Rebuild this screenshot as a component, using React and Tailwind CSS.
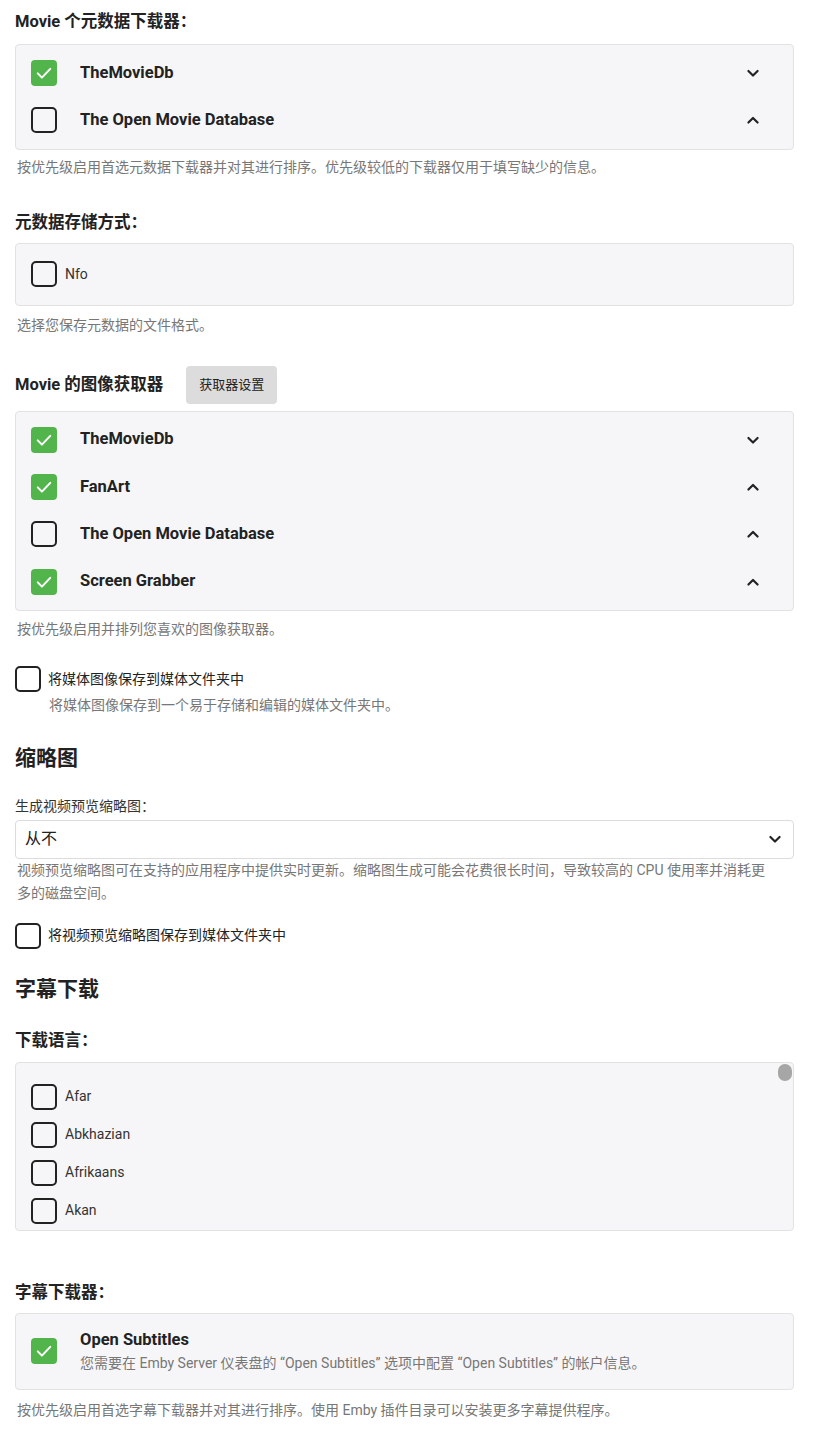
import React from 'react';

const FONT = 'font-["Roboto","Noto_Sans_CJK_SC",sans-serif]';

const Chevron = ({ up }) => (
  <svg width="20" height="20" viewBox="0 0 24 24" fill="none" stroke="#222" strokeWidth="2.6" strokeLinecap="round" strokeLinejoin="round">
    {up ? <path d="M6.5 15l5.5-5.5 5.5 5.5" /> : <path d="M6.5 9.5l5.5 5.5 5.5-5.5" />}
  </svg>
);

const Check = ({ checked }) =>
  checked ? (
    <div className="w-[26px] h-[26px] shrink-0 rounded-[4px] bg-[#52b54b] flex items-center justify-center">
      <svg width="20" height="20" viewBox="0 0 24 24" fill="none" stroke="#fff" strokeWidth="2.4" strokeLinecap="round" strokeLinejoin="round">
        <path d="M4.5 12.5l5 5L19.5 7" />
      </svg>
    </div>
  ) : (
    <div className="w-[26px] h-[26px] shrink-0 rounded-[5px] border-2 border-[#222]" />
  );

const Desc = ({ children, className = '' }) => (
  <p className={`text-[14px] leading-[20px] text-[#777] px-[2px] ${className}`}>{children}</p>
);

const Title = ({ children, className = '' }) => (
  <h3 className={`text-[16.5px] leading-[24px] font-bold text-[#222] ${className}`}>{children}</h3>
);

// sortable provider list
const SortList = ({ items }) => (
  <div className="bg-[#f6f6f8] border border-[#e2e2e2] rounded-[4px] py-[4.5px]">
    {items.map((it, i) => (
      <div key={it.name} className="h-[47.3px] flex items-center pl-[15px] pr-[30px]">
        <Check checked={it.checked} />
        <span className="ml-[23px] text-[16.5px] font-bold text-[#222] flex-1">{it.name}</span>
        <Chevron up={i > 0} />
      </div>
    ))}
  </div>
);

const langs = ['Afar', 'Abkhazian', 'Afrikaans', 'Akan'];

export default function App() {
  return (
    <div className={`${FONT} bg-white w-[833px] min-h-[1438px] px-[15px] pb-[20px] text-[#222]`}>
      <div className="w-[779px]">
        <Title className="pt-[10px]">Movie 个元数据下载器：</Title>
        <div className="mt-[10px]">
          <SortList
            items={[
              { name: 'TheMovieDb', checked: true },
              { name: 'The Open Movie Database', checked: false },
            ]}
          />
        </div>
        <Desc className="mt-[7px]">按优先级启用首选元数据下载器并对其进行排序。优先级较低的下载器仅用于填写缺少的信息。</Desc>

        <Title className="mt-[34px]">元数据存储方式：</Title>
        <div className="mt-[8px] h-[63px] bg-[#f6f6f8] border border-[#e2e2e2] rounded-[4px] flex items-center pl-[15px]">
          <Check checked={false} />
          <span className="ml-[8px] text-[14px] text-[#333]">Nfo</span>
        </div>
        <Desc className="mt-[9px]">选择您保存元数据的文件格式。</Desc>

        <div className="mt-[31px] flex items-center h-[38px]">
          <Title>Movie 的图像获取器</Title>
          <button className="ml-[23px] h-[38px] w-[91px] rounded-[4px] bg-[#dcdcdc] text-[13px] text-[#222]">获取器设置</button>
        </div>
        <div className="mt-[7px]">
          <SortList
            items={[
              { name: 'TheMovieDb', checked: true },
              { name: 'FanArt', checked: true },
              { name: 'The Open Movie Database', checked: false },
              { name: 'Screen Grabber', checked: true },
            ]}
          />
        </div>
        <Desc className="mt-[8px]">按优先级启用并排列您喜欢的图像获取器。</Desc>

        <div className="mt-[27px] flex items-start">
          <Check checked={false} />
          <div className="ml-[7px]">
            <p className="text-[14px] leading-[26px] text-[#222]">将媒体图像保存到媒体文件夹中</p>
            <p className="mt-[3px] text-[14px] leading-[20px] text-[#777] ml-[1px]">将媒体图像保存到一个易于存储和编辑的媒体文件夹中。</p>
          </div>
        </div>

        <h2 className="mt-[29px] text-[21px] leading-[28px] font-bold">缩略图</h2>
        <p className="mt-[24px] text-[14px] leading-[20px] text-[#333]">生成视频预览缩略图：</p>
        <div className="mt-[4px] h-[39px] border border-[#dcdcdc] rounded-[4px] flex items-center pl-[9px] pr-[8px] bg-white">
          <span className="flex-1 text-[16px] text-[#222]">从不</span>
          <Chevron />
        </div>
        <p className="text-[14px] leading-[23px] text-[#777] pl-[2px] pr-[20px]">
          视频预览缩略图可在支持的应用程序中提供实时更新。缩略图生成可能会花费很长时间，导致较高的 CPU 使用率并消耗更多的磁盘空间。
        </p>

        <div className="mt-[18px] flex items-center">
          <Check checked={false} />
          <span className="ml-[7px] text-[14px] text-[#222]">将视频预览缩略图保存到媒体文件夹中</span>
        </div>

        <h2 className="mt-[26px] text-[21px] leading-[28px] font-bold">字幕下载</h2>
        <Title className="mt-[26px]">下载语言：</Title>
        <div className="relative mt-[9px] h-[169px] overflow-hidden bg-[#f6f6f8] border border-[#e2e2e2] rounded-[4px] pt-[15px] pl-[15px]">
          {langs.map((l) => (
            <div key={l} className="h-[38px] flex items-center">
              <Check checked={false} />
              <span className="ml-[8px] text-[14px] text-[#333]">{l}</span>
            </div>
          ))}
          <div className="absolute right-[1px] top-[1px] w-[14px] h-[17px] rounded-full bg-[#a6a6a6]" />
        </div>

        <Title className="mt-[50px]">字幕下载器：</Title>
        <div className="mt-[8px] h-[77px] bg-[#f6f6f8] border border-[#e2e2e2] rounded-[4px] flex items-center pl-[15px]">
          <Check checked />
          <div className="ml-[23px]">
            <p className="text-[16.5px] leading-[22px] font-bold text-[#222]">Open Subtitles</p>
            <p className="mt-[2px] text-[14px] leading-[20px] text-[#777]">
              您需要在 Emby Server 仪表盘的 “Open Subtitles” 选项中配置 “Open Subtitles” 的帐户信息。
            </p>
          </div>
        </div>
        <Desc className="mt-[10px]">按优先级启用首选字幕下载器并对其进行排序。使用 Emby 插件目录可以安装更多字幕提供程序。</Desc>
      </div>
    </div>
  );
}
